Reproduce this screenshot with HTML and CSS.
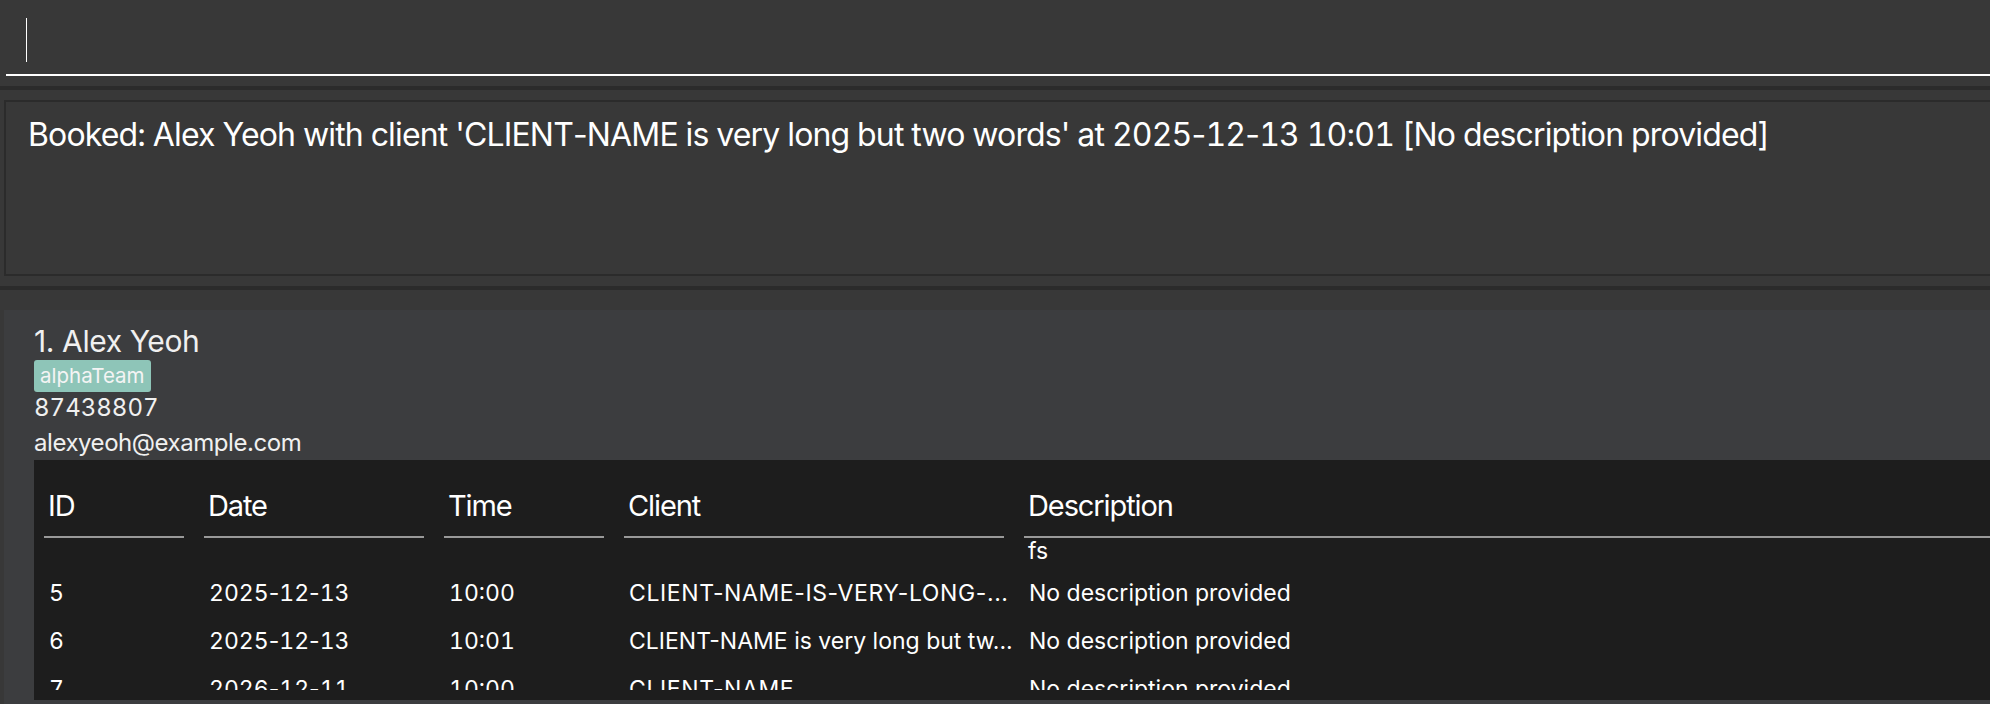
FILE: index.html
```html
<!DOCTYPE html>
<html lang="en">
<head>
<meta charset="utf-8">
<title>Address Book</title>
<link rel="stylesheet" href="styles.css">
</head>
<body>
<div class="app">
  <div class="command"><span class="caret"></span></div>
  <div class="divider"></div>
  <div class="result">
    <p class="result-text">Booked: Alex Yeoh with client 'CLIENT<span class="p">-</span>NAME is very long but two words' at 2025<span class="p">-</span>12<span class="p">-</span>13 10:01 [No description provided]</p>
  </div>
  <div class="divider divider-last"></div>
  <div class="card">
    <div class="name">1. Alex Yeoh</div>
    <div class="tags"><span class="tag">alphaTeam</span></div>
    <div class="phone">87438807</div>
    <div class="email">alexyeoh@example.com</div>
    <div class="table">
      <div class="thead">
        <div class="th">ID</div>
        <div class="th">Date</div>
        <div class="th">Time</div>
        <div class="th">Client</div>
        <div class="th">Description</div>
      </div>
      <div class="tbody">
        <div class="fs-row"><span class="fs">fs</span></div>
        <div class="tr">
          <div class="td num">5</div>
          <div class="td num">2025<span class="p">-</span>12<span class="p">-</span>13</div>
          <div class="td num">10:00</div>
          <div class="td caps">CLIENT-NAME-IS-VERY-LONG-...</div>
          <div class="td">No description provided</div>
        </div>
        <div class="tr">
          <div class="td num">6</div>
          <div class="td num">2025<span class="p">-</span>12<span class="p">-</span>13</div>
          <div class="td num">10:01</div>
          <div class="td">CLIENT-NAME is very long but tw...</div>
          <div class="td">No description provided</div>
        </div>
        <div class="tr">
          <div class="td num">7</div>
          <div class="td num">2026<span class="p">-</span>12<span class="p">-</span>11</div>
          <div class="td num">10:00</div>
          <div class="td caps">CLIENT-NAME</div>
          <div class="td">No description provided</div>
        </div>
      </div>
    </div>
  </div>
</div>
</body>
</html>
```
FILE: styles.css
```css
html, body {
  margin: 0;
  padding: 0;
  width: 1990px;
  height: 704px;
  overflow: hidden;
  background: #383838;
  font-family: Inter, "Noto Sans", sans-serif;
  color: #ffffff;
}

.app {
  width: 2100px;
  height: 704px;
}

.command {
  margin-left: 6px;
  height: 76px;
  box-sizing: border-box;
  border-bottom: 2px solid #ffffff;
  padding: 18px 0 0 20px;
}

.caret {
  display: block;
  width: 1px;
  height: 44px;
  background: #ffffff;
}

.divider {
  height: 4px;
  background: #2b2b2b;
  margin: 10px 0;
}

.divider-last {
  margin-bottom: 20px;
}

.result {
  margin-left: 4px;
  height: 176px;
  box-sizing: border-box;
  border: 2px solid #2b2b2b;
  padding: 13px 22px;
}

.result-text {
  margin: 0;
  font-size: 32px;
  line-height: 40px;
  letter-spacing: -0.84px;
  font-variant-numeric: tabular-nums;
  white-space: nowrap;
  color: #ffffff;
}

.p {
  font-variant-numeric: normal;
}

.card {
  margin-left: 4px;
  background: #3c3d3f;
  padding: 13px 30px 0;
  height: 420px;
  color: #f0f0f0;
}

.name {
  font-size: 30px;
  line-height: 36px;
  letter-spacing: -0.4px;
}

.tags {
  display: flex;
  margin-top: 1px;
}

.tag {
  height: 32px;
  line-height: 32px;
  padding: 0 6px;
  border-radius: 3px;
  background: #8ec5b8;
  color: #f4f4f4;
  font-size: 20.5px;
}

.phone,
.email {
  font-size: 24px;
  line-height: 32px;
}

.phone {
  font-variant-numeric: tabular-nums;
}

.email {
  margin-top: 3px;
  letter-spacing: -0.45px;
}

.table {
  margin-top: 1px;
  width: 2040px;
  height: 240px;
  box-sizing: border-box;
  padding-bottom: 10px;
  background: #1d1d1d;
  color: #ffffff;
}

.thead,
.tr,
.fs-row {
  display: grid;
  grid-template-columns: 160px 240px 180px 400px 1fr;
}

.th {
  margin: 0 10px;
  padding: 28px 0 12px 4px;
  border-bottom: 2px solid #999999;
  font-size: 29px;
  line-height: 36px;
  letter-spacing: -1.1px;
}

.tbody {
  height: 152px;
  overflow: hidden;
}

.fs-row {
  height: 31px;
  font-size: 23px;
  line-height: 26px;
}

.fs {
  grid-column: 5;
  padding-left: 14px;
}

.tr {
  height: 48px;
  font-size: 23px;
  line-height: 48px;
}

.td {
  padding-left: 15px;
  white-space: nowrap;
  overflow: hidden;
}

.num {
  font-variant-numeric: tabular-nums;
}

.caps {
  letter-spacing: 0.6px;
}
```
